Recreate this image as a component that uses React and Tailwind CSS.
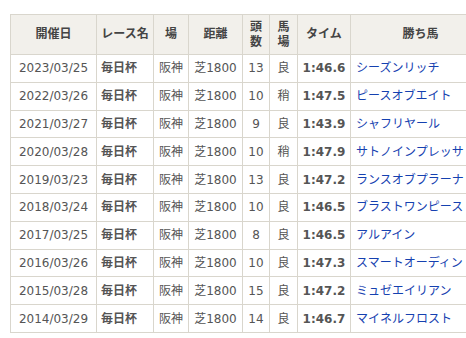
import React from "react";

const rows = [
  ["2023/03/25", "阪神", "芝1800", "13", "良", "1:46.6", "シーズンリッチ"],
  ["2022/03/26", "阪神", "芝1800", "10", "稍", "1:47.5", "ピースオブエイト"],
  ["2021/03/27", "阪神", "芝1800", "9", "良", "1:43.9", "シャフリヤール"],
  ["2020/03/28", "阪神", "芝1800", "10", "稍", "1:47.9", "サトノインプレッサ"],
  ["2019/03/23", "阪神", "芝1800", "13", "良", "1:47.2", "ランスオブプラーナ"],
  ["2018/03/24", "阪神", "芝1800", "10", "良", "1:46.5", "ブラストワンピース"],
  ["2017/03/25", "阪神", "芝1800", "8", "良", "1:46.5", "アルアイン"],
  ["2016/03/26", "阪神", "芝1800", "10", "良", "1:47.3", "スマートオーディン"],
  ["2015/03/28", "阪神", "芝1800", "15", "良", "1:47.2", "ミュゼエイリアン"],
  ["2014/03/29", "阪神", "芝1800", "14", "良", "1:46.7", "マイネルフロスト"],
];

export default function App() {
  const th = "border border-[#d9d6cd] bg-[#f2f0eb] font-bold text-[#444] text-center leading-[15px] p-0";
  const td = "border border-[#d9d6cd] p-0 text-[#555]";
  return (
    <div
      className="w-[466px] h-[338px] overflow-hidden bg-white pt-[14px] pl-[10px]"
      style={{ fontFamily: '"DejaVu Sans", "Noto Sans CJK JP", sans-serif' }}
    >
      <table className="border-collapse table-fixed text-[12px] w-[480px]">
        <colgroup>
          <col className="w-[86px]" />
          <col className="w-[57px]" />
          <col className="w-[35px]" />
          <col className="w-[54px]" />
          <col className="w-[27px]" />
          <col className="w-[28px]" />
          <col className="w-[53px]" />
          <col className="w-[140px]" />
        </colgroup>
        <thead>
          <tr className="h-[40px]">
            <th className={th}>開催日</th>
            <th className={th}>レース名</th>
            <th className={th}>場</th>
            <th className={th}>距離</th>
            <th className={th}>頭<br />数</th>
            <th className={th}>馬<br />場</th>
            <th className={th}>タイム</th>
            <th className={th}>勝ち馬</th>
          </tr>
        </thead>
        <tbody>
          {rows.map((r, i) => (
            <tr key={i} className="h-[27.8px]">
              <td className={`${td} text-center`}>{r[0]}</td>
              <td className={`${td} pl-[4px] font-bold text-[#0a2fa3]`}>毎日杯</td>
              <td className={`${td} text-center`}>{r[1]}</td>
              <td className={`${td} text-center`}>{r[2]}</td>
              <td className={`${td} text-center`}>{r[3]}</td>
              <td className={`${td} text-center`}>{r[4]}</td>
              <td className={`${td} text-center font-bold text-[#444]`}>{r[5]}</td>
              <td className={`${td} pl-[5px] text-[#1541b0] whitespace-nowrap`}>{r[6]}</td>
            </tr>
          ))}
        </tbody>
      </table>
    </div>
  );
}
